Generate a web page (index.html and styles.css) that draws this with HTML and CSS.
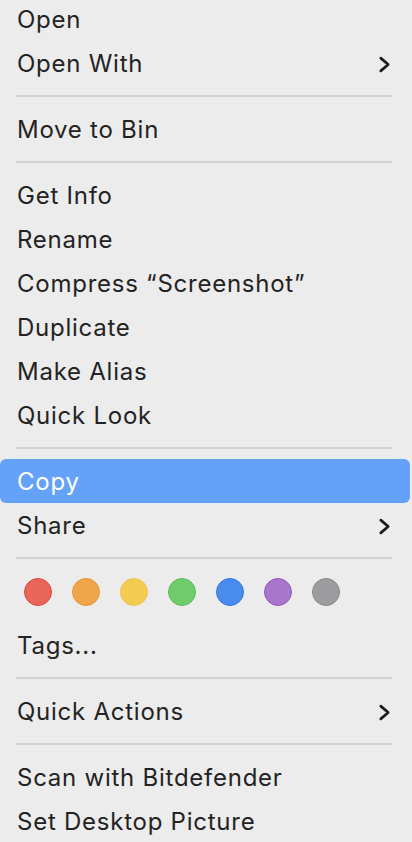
FILE: index.html
```html
<!DOCTYPE html>
<html lang="en">
<head>
<meta charset="utf-8">
<title>Context menu</title>
<link rel="stylesheet" href="styles.css">
</head>
<body>
<div class="menu">
  <div class="item">Open</div>
  <div class="item">Open With<svg class="chev" viewBox="0 0 12 16"><path d="M2.5 2 L9.5 8 L2.5 14"/></svg></div>
  <div class="sep"></div>
  <div class="item">Move to Bin</div>
  <div class="sep"></div>
  <div class="item">Get Info</div>
  <div class="item">Rename</div>
  <div class="item">Compress “Screenshot”</div>
  <div class="item">Duplicate</div>
  <div class="item">Make Alias</div>
  <div class="item">Quick Look</div>
  <div class="sep"></div>
  <div class="item active">Copy</div>
  <div class="item">Share<svg class="chev" viewBox="0 0 12 16"><path d="M2.5 2 L9.5 8 L2.5 14"/></svg></div>
  <div class="sep"></div>
  <div class="tags">
    <span class="dot red"></span>
    <span class="dot orange"></span>
    <span class="dot yellow"></span>
    <span class="dot green"></span>
    <span class="dot blue"></span>
    <span class="dot purple"></span>
    <span class="dot gray"></span>
  </div>
  <div class="item">Tags...</div>
  <div class="sep"></div>
  <div class="item">Quick Actions<svg class="chev" viewBox="0 0 12 16"><path d="M2.5 2 L9.5 8 L2.5 14"/></svg></div>
  <div class="sep"></div>
  <div class="item">Scan with Bitdefender</div>
  <div class="item">Set Desktop Picture</div>
</div>
</body>
</html>
```
FILE: styles.css
```css
html, body {
  margin: 0;
  padding: 0;
  background: #ececec;
  overflow: hidden;
}

.menu {
  margin-top: -3px;
  width: 412px;
  display: flex;
  flex-direction: column;
  font-family: Inter, "Liberation Sans", sans-serif;
  font-size: 24px;
  letter-spacing: 0.75px;
  color: #232323;
}

.item {
  height: 44px;
  box-sizing: border-box;
  line-height: 40px;
  padding: 2px 21px 0 17px;
  display: flex;
  align-items: center;
  justify-content: space-between;
  white-space: nowrap;
}

.item.active {
  background: #64a2f9;
  color: #ffffff;
  border-radius: 6px;
  margin-right: 2px;
}

.chev {
  width: 13px;
  height: 17px;
  fill: none;
  stroke: #1a1a1a;
  stroke-width: 2.5;
  stroke-linecap: round;
  stroke-linejoin: round;
}

.sep {
  height: 22px;
  display: flex;
  align-items: center;
  padding: 0 20px 0 16px;
}

.sep::before {
  content: "";
  flex: 1;
  height: 1.5px;
  background: #d2d2d2;
}

.tags {
  height: 54px;
  box-sizing: border-box;
  padding: 9px 0 0 24px;
  display: flex;
  gap: 20px;
}

.dot {
  width: 28px;
  height: 28px;
  box-sizing: border-box;
  border-radius: 50%;
  border: 1.5px solid;
}

.red { background: #e8665a; border-color: #e0453b; }
.orange { background: #eea64c; border-color: #ea9434; }
.yellow { background: #f3cd53; border-color: #efc343; }
.green { background: #6fcb6b; border-color: #5bbb55; }
.blue { background: #4a8ced; border-color: #2f79ea; }
.purple { background: #a876ca; border-color: #9358c0; }
.gray { background: #9c9c9f; border-color: #89898d; }
```
